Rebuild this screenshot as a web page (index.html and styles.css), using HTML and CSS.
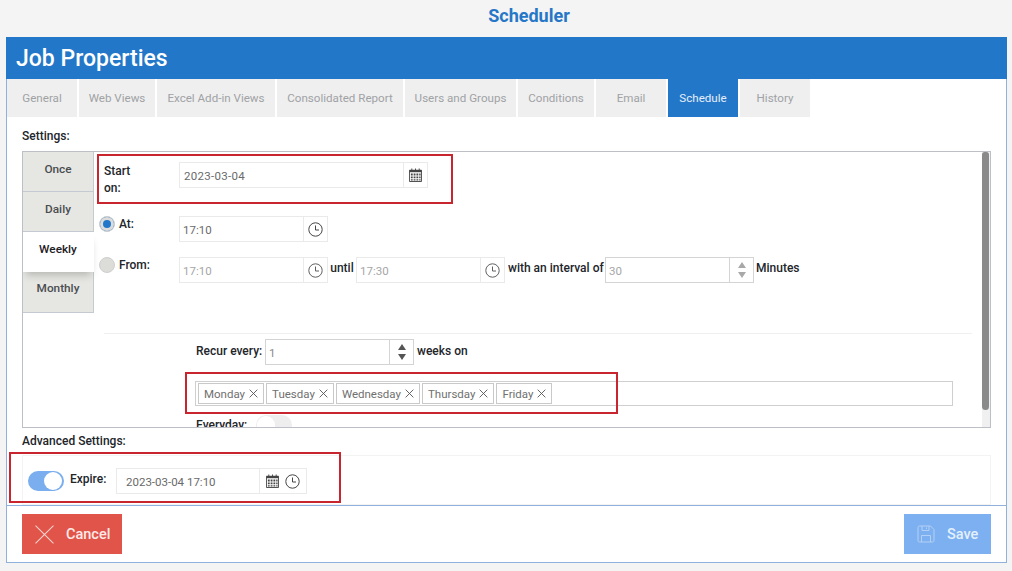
FILE: index.html
```html
<!DOCTYPE html>
<html lang="en">
<head>
<meta charset="utf-8">
<title>Scheduler</title>
<link rel="stylesheet" href="styles.css">
</head>
<body>
<svg class="defs" width="0" height="0" aria-hidden="true">
  <symbol id="cal" viewBox="0 0 14 15">
    <path d="M.5 2.500h13v12H.5z" fill="none" stroke="#444"/>
    <path d="M.5 2h13v2.500H.5z" fill="#444"/>
    <path d="M3 .5v2M7 .5v2M11 .5v2" stroke="#444"/>
    <path d="M2 6h2v2H2zM5 6h2v2H5zM8 6h2v2H8zM11 6h1.500v2H11zM2 9h2v2H2zM5 9h2v2H5zM8 9h2v2H8zM11 9h1.500v2H11zM2 12h2v1.500H2zM5 12h2v1.500H5zM8 12h2v1.500H8zM11 12h1.500v1.500H11z" fill="#444"/>
  </symbol>
  <symbol id="clock" viewBox="0 0 15 15">
    <circle cx="7.500" cy="7.500" r="6.700" fill="none" stroke="#444" stroke-width="1"/>
    <path d="M7.500 3.500v4.500h3.500" fill="none" stroke="#444"/>
  </symbol>
  <symbol id="x" viewBox="0 0 10 10">
    <path d="M.7.700l8.600 8.600M9.300.700L.7 9.300" fill="none" stroke="#555" stroke-width="1"/>
  </symbol>
</svg>
<h1 class="page-title">Scheduler</h1>
<main class="dialog">
  <header class="dialog-head">Job Properties</header>
  <nav class="tabs">
    <a class="tab">General</a>
    <a class="tab">Web Views</a>
    <a class="tab">Excel Add-in Views</a>
    <a class="tab">Consolidated Report</a>
    <a class="tab">Users and Groups</a>
    <a class="tab">Conditions</a>
    <a class="tab">Email</a>
    <a class="tab tab-active">Schedule</a>
    <a class="tab">History</a>
  </nav>
  <section class="content">
    <div class="section-label settings-label">Settings:</div>
    <div class="panel">
      <div class="side-tabs">
        <div class="side-tab">Once</div>
        <div class="side-tab">Daily</div>
        <div class="side-tab side-active">Weekly</div>
        <div class="side-tab side-last">Monthly</div>
      </div>
      <div class="panel-body">
        <div class="row row-start">
          <label class="lbl lbl-start">Start on:</label>
          <div class="field field-start"><span class="val val-date">2023-03-04</span><span class="addon"><svg class="ic-cal"><use href="#cal"/></svg></span></div>
        </div>
        <div class="row row-at">
          <span class="radio radio-on"></span>
          <label class="lbl lbl-radio">At:</label>
          <div class="field field-time"><span class="val">17:10</span><span class="addon"><svg class="ic-clock"><use href="#clock"/></svg></span></div>
        </div>
        <div class="row row-from">
          <span class="radio"></span>
          <label class="lbl lbl-radio">From:</label>
          <div class="field field-time off"><span class="val">17:10</span><span class="addon"><svg class="ic-clock"><use href="#clock"/></svg></span></div>
          <label class="lbl lbl-until">until</label>
          <div class="field field-time off"><span class="val">17:30</span><span class="addon"><svg class="ic-clock"><use href="#clock"/></svg></span></div>
          <label class="lbl lbl-interval">with an interval of</label>
          <div class="field field-num off-num"><span class="val">30</span><span class="spin"><i class="up"></i><i class="down"></i></span></div>
          <label class="lbl lbl-minutes">Minutes</label>
        </div>
        <hr class="sep">
        <div class="row row-recur">
          <label class="lbl lbl-recur">Recur every:</label>
          <div class="field field-num dark-num"><span class="val">1</span><span class="spin"><i class="up"></i><i class="down"></i></span></div>
          <label class="lbl lbl-weeks">weeks on</label>
        </div>
        <div class="tagbox">
          <span class="tag">Monday<svg class="ic-x"><use href="#x"/></svg></span>
          <span class="tag">Tuesday<svg class="ic-x"><use href="#x"/></svg></span>
          <span class="tag">Wednesday<svg class="ic-x"><use href="#x"/></svg></span>
          <span class="tag">Thursday<svg class="ic-x"><use href="#x"/></svg></span>
          <span class="tag">Friday<svg class="ic-x"><use href="#x"/></svg></span>
        </div>
        <div class="row row-everyday">
          <label class="lbl">Everyday:</label>
          <span class="switch"><span class="knob"></span></span>
        </div>
      </div>
      <div class="scrollbar"><div class="thumb"></div></div>
      <div class="mark mark-start"></div>
      <div class="mark mark-tags"></div>
    </div>
    <div class="section-label adv-label">Advanced Settings:</div>
    <div class="adv">
      <span class="switch switch-on"><span class="knob"></span></span>
      <label class="lbl lbl-expire">Expire:</label>
      <div class="field field-expire"><span class="val">2023-03-04 17:10</span><span class="addon addon-two"><svg class="ic-cal"><use href="#cal"/></svg><svg class="ic-clock"><use href="#clock"/></svg></span></div>
      <div class="mark mark-expire"></div>
    </div>
  </section>
  <footer class="foot">
    <button class="btn btn-cancel" type="button">
      <svg class="btn-ic-x" viewBox="0 0 18 18"><path d="M.5.500l17 17M17.500.500l-17 17" fill="none" stroke="#f6d5d1" stroke-width="1"/></svg>
      <span>Cancel</span>
    </button>
    <button class="btn btn-save" type="button">
      <svg class="btn-ic-save" viewBox="0 0 18 18"><path d="M1 2.500A1.500 1.500 0 0 1 2.500 1h11L17 4.500v11a1.500 1.500 0 0 1-1.500 1.500h-13A1.500 1.500 0 0 1 1 15.500zM5 1v4.500h7V1M4.500 17v-6.500h9V17M9.500 2.500v1.500" fill="none" stroke="#b4d0f4" stroke-width="1"/></svg>
      <span>Save</span>
    </button>
  </footer>
</main>
</body>
</html>
```
FILE: styles.css
```css
* { box-sizing: border-box; }
html, body { margin: 0; padding: 0; }
body {
  width: 1012px;
  height: 571px;
  overflow: hidden;
  background: #f4f4f4;
  font-family: Roboto, "Liberation Sans", sans-serif;
  font-size: 12px;
  color: #23262b;
}
.defs { position: absolute; }
.page-title {
  margin: 0 0 0 46px;
  height: 37px;
  line-height: 31px;
  text-align: center;
  font-size: 18px;
  font-weight: 700;
  color: #2677c7;
}
.dialog {
  margin-left: 6px;
  width: 1001px;
  height: 526px;
  background: #fff;
  border: 1px solid #8fb1dc;
  border-top: 0;
  display: flex;
  flex-direction: column;
}
.dialog-head {
  margin: 0 -1px;
  height: 42px;
  padding-left: 10px;
  line-height: 44px;
  background: #2377c8;
  color: #fff;
  font-size: 23px;
  font-weight: 500;
}
.tabs {
  display: grid;
  grid-template-columns: 70px 76px 118px 126px 111px 76px 70px 70px 70px;
  column-gap: 2px;
  height: 34px;
  flex: none;
}
.tab {
  background: #efefef;
  color: #a0a2a5;
  font-size: 11.600px;
  line-height: 38px;
  text-align: center;
  white-space: nowrap;
}
.tab-active { background: #2377c8; color: #e6eff9; }
.content {
  flex: 1;
  min-height: 0;
  padding: 0 15px;
}
.section-label {
  font-weight: 500;
  font-size: 12px;
  color: #22252a;
}
.settings-label { height: 38px; line-height: 46px; }
.panel {
  position: relative;
  width: 969px;
  height: 277px;
  border: 1px solid #bcc0c6;
  display: flex;
  overflow: hidden;
}
.side-tabs {
  flex: none;
  width: 71px;
  display: flex;
  flex-direction: column;
  position: relative;
  z-index: 1;
}
.side-tab {
  height: 40px;
  background: #e6e6e3;
  border-right: 1px solid #c5cad2;
  border-bottom: 1px solid #c5cad2;
  text-align: center;
  font-weight: 500;
  font-size: 11.800px;
  color: #4a4d50;
  line-height: 34px;
}
.side-active {
  background: #fff;
  color: #1d2025;
  border-right-color: #fff;
  border-bottom: 0;
  box-shadow: 0 6px 8px -3px rgba(0,0,0,.22);
  position: relative;
}
.side-last { height: 41px; line-height: 33px; }
.panel-body {
  flex: 1;
  min-width: 0;
  overflow: hidden;
  padding-left: 5px;
}
.scrollbar {
  flex: none;
  width: 8px;
  background: #f0f0f0;
}
.thumb { width: 7px; height: 258px; border-radius: 3px 3px 4px 4px; background: #8a8a8a; }
.row { display: flex; align-items: flex-start; }
.lbl { font-weight: 500; font-size: 12px; color: #22252a; white-space: nowrap; }
.field {
  display: flex;
  height: 26px;
  border: 1px solid #eaeaea;
  background: #fff;
  flex: none;
}
.val { flex: 1; padding-left: 3px; line-height: 27px; font-size: 11.500px; color: #6a6a6a; }
.val-date { letter-spacing: .3px; padding-left: 4px; line-height: 26px; }
.addon {
  flex: none;
  width: 24px;
  border-left: 1px solid #eaeaea;
  display: flex;
  align-items: center;
  justify-content: center;
}
.ic-cal { width: 13px; height: 14px; }
.ic-clock { width: 15px; height: 15px; }
.row-start { height: 52px; padding-top: 10px; }
.lbl-start { width: 80px; padding: 1px 34px 0 5px; white-space: normal; line-height: 17px; }
.field-start { width: 249px; }
.row-at, .row-from { height: 41px; padding-top: 12px; }
.radio {
  flex: none;
  width: 16px;
  height: 16px;
  border-radius: 50%;
  background: #dcdcd9;
  border: 1px solid #cfcfcf;
}
.radio-on { background: #2377c8; box-shadow: inset 0 0 0 3px #dcdcdc; }
.lbl-radio { width: 64px; padding-left: 4px; line-height: 17px; }
.field-time { width: 149px; }
.off .val { color: #a6a6a6; }
.off .addon svg { opacity: .85; }
.lbl-until { width: 28px; text-align: center; line-height: 22px; }
.lbl-interval { padding-left: 3px; width: 100px; line-height: 22px; }
.field-num { width: 149px; border-color: #d4d4d4; }
.spin {
  flex: none;
  width: 24px;
  border-left: 1px solid #d4d4d4;
  display: flex;
  flex-direction: column;
  align-items: center;
  justify-content: center;
  gap: 4px;
}
.spin i { width: 0; height: 0; border-left: 4px solid transparent; border-right: 4px solid transparent; }
.up { border-bottom: 6px solid #555; }
.down { border-top: 6px solid #555; }
.off-num .val { color: #a6a6a6; }
.off-num .up { border-bottom-color: #a8a8a8; }
.off-num .down { border-top-color: #a8a8a8; }
.lbl-minutes { padding-left: 2px; line-height: 22px; }
.sep { margin: 47px 0 0 5px; width: 868px; height: 1px; border: 0; background: #f0f0f0; }
.row-recur { margin: 5px 0 0 97px; height: 42px; }
.lbl-recur { width: 69px; line-height: 24px; }
.dark-num .val { color: #8a8a8a; }
.lbl-weeks { padding-left: 3px; line-height: 24px; }
.tagbox {
  margin-left: 96px;
  width: 758px;
  height: 25px;
  border: 1px solid #cfcfcf;
  padding: 1px 2px;
  display: flex;
  gap: 2px;
}
.tag {
  display: flex;
  align-items: center;
  gap: 4px;
  height: 21px;
  padding: 0 5px;
  border: 1px solid #c9c9c9;
  color: #707070;
  font-size: 11.500px;
}
.ic-x { width: 9px; height: 9px; }
.row-everyday { margin: 9px 0 0 97px; align-items: flex-start; }
.row-everyday .lbl { width: 60px; line-height: 20px; }
.switch {
  position: relative;
  flex: none;
  width: 36px;
  height: 20px;
  border-radius: 10px;
  background: #eee;
}
.knob {
  position: absolute;
  top: 1px;
  left: 1px;
  width: 18px;
  height: 18px;
  border-radius: 50%;
  background: #fff;
}
.switch-on { background: #7aaeee; margin-top: 15px; }
.switch-on .knob { left: 16px; }
.adv-label { height: 27px; line-height: 27px; }
.adv {
  position: relative;
  width: 969px;
  height: 50px;
  border: 1px solid #f3f3f3;
  padding-left: 5px;
  display: flex;
  align-items: flex-start;
}
.lbl-expire { width: 52px; padding-left: 6px; margin-top: 16px; }
.field-expire { width: 191px; margin-top: 12px; }
.field-expire .val { padding-left: 9px; }
.addon-two { width: 47px; gap: 6px; }
.foot {
  flex: none;
  height: 57px;
  border-top: 1px solid #8fb1dc;
  padding: 8px 15px 0;
  display: flex;
  justify-content: space-between;
  align-items: flex-start;
}
.btn {
  height: 40px;
  border: 0;
  padding: 0;
  display: flex;
  align-items: center;
  color: #fff;
  font-family: inherit;
  font-weight: 500;
  font-size: 14.500px;
}
.btn-cancel { width: 100px; background: #e1544a; padding-left: 13px; gap: 12px; color: #fce9e6; }
.btn-save { width: 87px; background: #7cb0f0; padding-left: 13px; gap: 12px; color: #e3effc; }
.btn-ic-x { width: 19px; height: 19px; }
.btn-ic-save { width: 18px; height: 18px; }
.mark { position: absolute; border: 2px solid #c8252f; z-index: 3; pointer-events: none; }
.mark-start { left: 74px; top: 2px; width: 356px; height: 50px; }
.mark-tags { left: 162px; top: 220px; width: 433px; height: 42px; }
.mark-expire { left: -14px; top: -4px; width: 332px; height: 51px; }
```
